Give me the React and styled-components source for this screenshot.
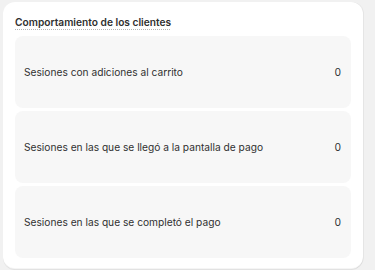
import styled, { createGlobalStyle } from "styled-components";

const GlobalStyle = createGlobalStyle`
  html, body {
    margin: 0;
    padding: 0;
    background: #f1f1f1;
    font-family: Inter, "Noto Sans", "Liberation Sans", sans-serif;
    -webkit-font-smoothing: antialiased;
  }
`;

const Page = styled.div`
  padding: 2px 12px 1px 3px;
`;

const Card = styled.section`
  background: #ffffff;
  border-radius: 12px;
  box-shadow: 0 1px 0 0 rgba(26, 26, 26, 0.07), 1px 0 0 0 rgba(26, 26, 26, 0.05),
    inset 0 -1px 0 0 rgba(0, 0, 0, 0.04);
  padding: 10px 12px 11px;
  display: flex;
  flex-direction: column;
  gap: 4px;
`;

const Title = styled.h2`
  margin: 0;
  font-size: 10.2px;
  line-height: 20px;
  font-weight: 600;
  color: #303030;
  text-decoration: underline dotted #b5b5b5;
  text-decoration-thickness: 1px;
  text-underline-offset: 3px;
  align-self: flex-start;
`;

const List = styled.div`
  display: flex;
  flex-direction: column;
  gap: 3px;
`;

const Row = styled.div`
  height: 72px;
  background: #f7f7f7;
  border-radius: 8px;
  display: flex;
  align-items: center;
  justify-content: space-between;
  padding: 0 10px 0 9px;
  font-size: 10.2px;
  line-height: 20px;
  color: #303030;
`;

const Value = styled.span`
  font-variant-numeric: tabular-nums;
`;

const rows = [
  { label: "Sesiones con adiciones al carrito", value: 0 },
  { label: "Sesiones en las que se llegó a la pantalla de pago", value: 0 },
  { label: "Sesiones en las que se completó el pago", value: 0 },
];

export default function App() {
  return (
    <>
      <GlobalStyle />
      <Page>
        <Card>
          <Title>Comportamiento de los clientes</Title>
          <List>
            {rows.map((r) => (
              <Row key={r.label}>
                <span>{r.label}</span>
                <Value>{r.value}</Value>
              </Row>
            ))}
          </List>
        </Card>
      </Page>
    </>
  );
}
